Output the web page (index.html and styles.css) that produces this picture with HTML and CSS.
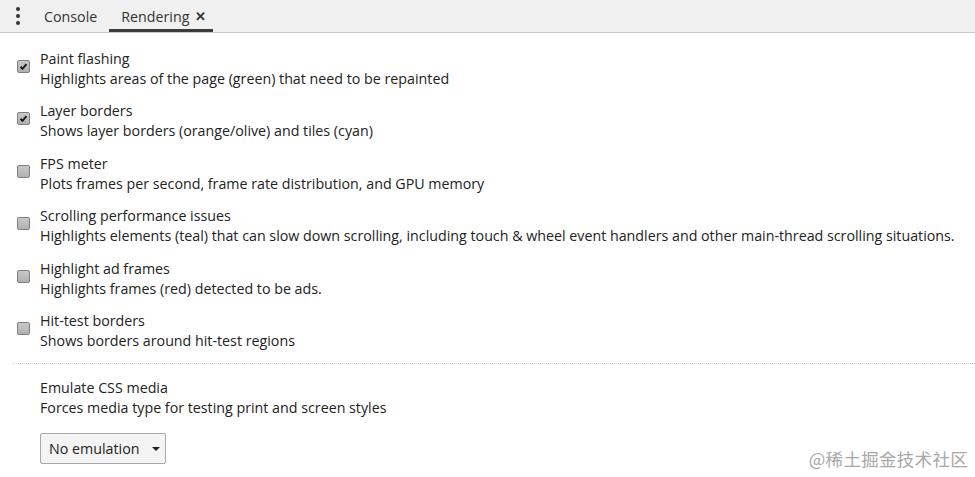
FILE: index.html
```html
<!DOCTYPE html>
<html>
<head>
<meta charset="utf-8">
<link rel="stylesheet" href="styles.css">
</head>
<body>
<div class="tabbar">
  <div class="menu"><span></span><span></span><span></span></div>
  <div class="tab">Console</div>
  <div class="tab active">Rendering <span class="close">✕</span></div>
</div>
<div class="content">
  <div class="row">
    <div class="cb checked"><svg viewBox="0 0 13 13" width="13" height="13"><path d="M3 6.8 L5.3 9.2 L10 3.6" fill="none" stroke="#1a1a1a" stroke-width="2.2"/></svg></div>
    <div class="txt"><div class="title">Paint flashing</div><div class="desc">Highlights areas of the page (green) that need to be repainted</div></div>
  </div>
  <div class="row">
    <div class="cb checked"><svg viewBox="0 0 13 13" width="13" height="13"><path d="M3 6.8 L5.3 9.2 L10 3.6" fill="none" stroke="#1a1a1a" stroke-width="2.2"/></svg></div>
    <div class="txt"><div class="title">Layer borders</div><div class="desc">Shows layer borders (orange/olive) and tiles (cyan)</div></div>
  </div>
  <div class="row">
    <div class="cb"></div>
    <div class="txt"><div class="title">FPS meter</div><div class="desc">Plots frames per second, frame rate distribution, and GPU memory</div></div>
  </div>
  <div class="row">
    <div class="cb"></div>
    <div class="txt"><div class="title">Scrolling performance issues</div><div class="desc">Highlights elements (teal) that can slow down scrolling, including touch &amp; wheel event handlers and other main-thread scrolling situations.</div></div>
  </div>
  <div class="row">
    <div class="cb"></div>
    <div class="txt"><div class="title">Highlight ad frames</div><div class="desc">Highlights frames (red) detected to be ads.</div></div>
  </div>
  <div class="row">
    <div class="cb"></div>
    <div class="txt"><div class="title">Hit-test borders</div><div class="desc">Shows borders around hit-test regions</div></div>
  </div>
  <div class="sep"></div>
  <div class="media">
    <div class="title">Emulate CSS media</div>
    <div class="desc">Forces media type for testing print and screen styles</div>
    <div class="select">No emulation <span class="arrow"></span></div>
  </div>
</div>
<div class="watermark">@稀土掘金技术社区</div>
</body>
</html>
```
FILE: styles.css
```css
html, body {
  margin: 0;
  padding: 0;
  background: #fff;
}
body {
  font-family: "Open Sans", "Noto Sans", sans-serif;
  font-size: 14.25px;
  color: #222;
  width: 975px;
  height: 477px;
  overflow: hidden;
  position: relative;
}
.tabbar {
  height: 32px;
  background: #f0f0f0;
  border-bottom: 1px solid #c8c8c8;
  display: flex;
  align-items: stretch;
}
.menu {
  width: 32px;
  display: flex;
  flex-direction: column;
  justify-content: center;
  gap: 3px;
  box-sizing: border-box;
  align-items: flex-start;
  padding-left: 16px;
}
.menu span {
  width: 4px;
  height: 4px;
  border-radius: 50%;
  background: #333;
}
.tab {
  display: flex;
  align-items: center;
  padding: 3px 12px 0 12px;
  color: #333;
  border-bottom: 3px solid transparent;
}
.tab.active {
  border-bottom-color: #3c3c3c;
  padding-right: 7px;
}
.close {
  font-size: 12.5px;
  font-weight: bold;
  margin-left: 6px;
  color: #333;
}
.content {
  padding: 16px 0 0 12px;
}
.row {
  display: flex;
  align-items: flex-start;
  margin-bottom: 12.4px;
}
.cb {
  width: 11px;
  height: 11px;
  margin: 11px 10px 0 5px;
  border: 1px solid #808080;
  border-radius: 2px;
  background: linear-gradient(#c8c8c8, #b0b0b0);
  display: flex;
  align-items: center;
  justify-content: center;
}
.cb svg {
  width: 11px;
  height: 11px;
}
.title, .desc {
  line-height: 20px;
  white-space: nowrap;
}
.sep {
  border-top: 1px dotted #cfcfcf;
  margin: 0 0 14px 0;
}
.media {
  padding-left: 28px;
}
.select {
  margin-top: 15px;
  border: 1px solid #a8a8a8;
  border-radius: 2px;
  background: #f4f4f4;
  display: flex;
  align-items: center;
  padding-left: 8px;
  box-sizing: border-box;
  width: 126px;
  height: 31px;
  color: #222;
}
.arrow {
  width: 0;
  height: 0;
  border-left: 4px solid transparent;
  border-right: 4px solid transparent;
  border-top: 4px solid #222;
  margin-left: auto;
  margin-right: 5px;
}
.watermark {
  position: absolute;
  right: 7px;
  bottom: 6px;
  font-family: "Noto Sans CJK SC", sans-serif;
  font-size: 17.5px;
  color: #a8a8a8;
  letter-spacing: 0.3px;
}
```
